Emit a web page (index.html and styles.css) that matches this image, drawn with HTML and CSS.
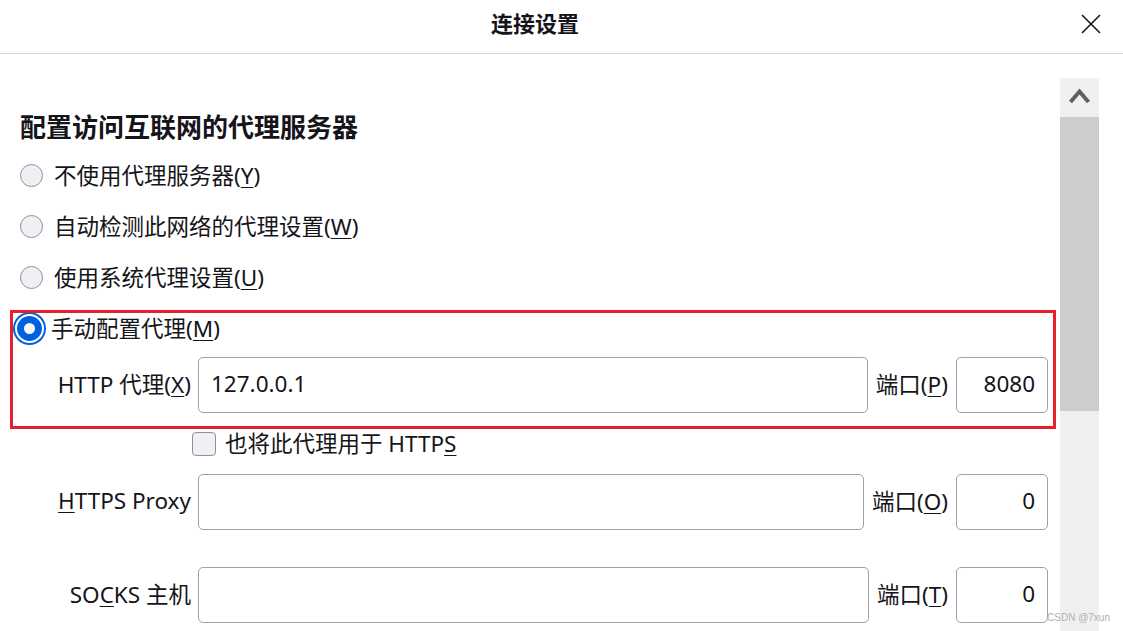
FILE: index.html
```html
<!DOCTYPE html>
<html lang="zh-CN">
  <head>
    <meta charset="utf-8" />
    <title>连接设置</title>
    <link rel="stylesheet" href="styles.css">
  </head>
  <body>
    <header class="dialog-header">
      <h1 class="dialog-title">连接设置</h1>
      <button class="close-btn" aria-label="关闭">
        <svg width="20" height="20" viewBox="0 0 20 20" fill="none" stroke="currentColor" stroke-width="1.6">
          <path d="M1 1L19 19M19 1L1 19"></path>
        </svg>
      </button>
    </header>

    <div class="dialog-body">
      <main class="content">
        <h2 class="section-title">配置访问互联网的代理服务器</h2>

        <label class="radio-row"><span class="radio"></span><span>不使用代理服务器(<u>Y</u>)</span></label>
        <label class="radio-row"><span class="radio"></span><span>自动检测此网络的代理设置(<u>W</u>)</span></label>
        <label class="radio-row"><span class="radio"></span><span>使用系统代理设置(<u>U</u>)</span></label>

        <!-- Manual proxy group, the red frame is the screenshot's annotation -->
        <div class="manual-group">
          <label class="radio-row checked"><span class="radio"></span><span>手动配置代理(<u>M</u>)</span></label>
          <div class="proxy-row first">
            <span class="proxy-label">HTTP 代理(<u>X</u>)</span>
            <div class="field">127.0.0.1</div>
            <span class="port-label">端口(<u>P</u>)</span>
            <div class="field port">8080</div>
          </div>
          <div class="annotation"></div>
        </div>

        <label class="check-row"><span class="checkbox"></span><span>也将此代理用于 HTTP<u>S</u></span></label>

        <div class="proxy-row https">
          <span class="proxy-label"><u>H</u>TTPS Proxy</span>
          <div class="field"></div>
          <span class="port-label">端口(<u>O</u>)</span>
          <div class="field port">0</div>
        </div>

        <div class="proxy-row socks">
          <span class="proxy-label">SO<u>C</u>KS 主机</span>
          <div class="field"></div>
          <span class="port-label">端口(<u>T</u>)</span>
          <div class="field port">0</div>
        </div>
      </main>

      <div class="scrollbar">
        <div class="scroll-up">
          <svg width="39" height="39" viewBox="0 0 39 39" fill="none" stroke="#606060" stroke-width="4">
            <polyline points="10.5,24 19.5,13.5 28.5,24"></polyline>
          </svg>
        </div>
        <div class="scroll-thumb"></div>
      </div>
    </div>

    <div class="watermark">CSDN @7xun</div>
  </body>
</html>
```

FILE: styles.css
```css
body {
  margin: 0;
  height: 631px;
  overflow: hidden;
  position: relative;
  font-family: "Noto Sans", "Noto Sans CJK SC", sans-serif;
  font-size: 22.5px;
  color: #15141a;
  background: #fff;
}

u {
  text-underline-offset: 3px;
  text-decoration-thickness: 1px;
}

/* Header */
.dialog-header {
  height: 54px;
  box-sizing: border-box;
  border-bottom: 1px solid #d8d8dc;
  padding-bottom: 10px;
  display: flex;
  align-items: center;
}

.dialog-title {
  flex: 1;
  margin: 0;
  padding-right: 11px;
  text-align: center;
  font-size: 22px;
  font-weight: 700;
  line-height: 30px;
  font-family: "Noto Sans CJK SC", sans-serif;
}

.close-btn {
  width: 20px;
  height: 20px;
  padding: 0;
  margin: 4px 22px 0 0;
  border: 0;
  background: none;
  color: #15141a;
  display: flex;
}

/* Body */
.dialog-body {
  display: flex;
  height: 577px;
}

.content {
  flex: 1;
  padding: 55px 12px 0 20px;
  overflow: hidden;
}

.section-title {
  margin: 0 0 7px;
  font-size: 26px;
  line-height: 34px;
  font-weight: 700;
  font-family: "Noto Sans CJK SC", sans-serif;
}

.radio-row {
  height: 51px;
  display: flex;
  align-items: center;
  gap: 11px;
  white-space: nowrap;
}

.radio-row span:last-child,
.check-row span:last-child {
  margin-top: -3px;
}

.radio {
  width: 23px;
  height: 23px;
  box-sizing: border-box;
  border-radius: 50%;
  border: 1px solid #8f8f9d;
  background: #f0f0f4;
  flex: none;
}

.radio-row.checked {
  margin-left: -3px;
  gap: 9px;
}

.radio-row.checked .radio {
  width: 25px;
  height: 25px;
  border: 7px solid #0061e0;
  background: #f9f9fb;
  box-shadow: 0 0 0 2px #fff, 0 0 0 4px #0061e0;
}

/* Proxy rows */
.manual-group {
  position: relative;
}

.annotation {
  position: absolute;
  top: 7px;
  bottom: -16px;
  left: -10px;
  right: -8px;
  border: 3px solid #e6212b;
  pointer-events: none;
}

.proxy-row {
  display: flex;
  align-items: center;
  height: 56px;
  white-space: nowrap;
}

.proxy-row > span {
  margin-top: -3px;
}

.proxy-row.first {
  margin-top: 3px;
}

.proxy-row.https {
  margin-top: 15px;
}

.proxy-row.socks {
  margin-top: 37px;
}

.proxy-label {
  width: 171px;
  flex: none;
  text-align: right;
  margin-right: 7px;
}

.field {
  flex: 1;
  height: 100%;
  box-sizing: border-box;
  border: 1px solid #9f9fa6;
  border-radius: 5px;
  padding: 0 12px 3px;
  display: flex;
  align-items: center;
}

.port-label {
  margin: 0 8px;
}

.field.port {
  flex: none;
  width: 92px;
  justify-content: flex-end;
}

.check-row {
  height: 30px;
  margin-top: 16px;
  padding-left: 172px;
  display: flex;
  align-items: center;
  gap: 9px;
  white-space: nowrap;
}

.checkbox {
  width: 24px;
  height: 24px;
  box-sizing: border-box;
  border: 1px solid #8f8f9d;
  border-radius: 4px;
  background: #f0f0f4;
  flex: none;
}

/* Scrollbar */
.scrollbar {
  width: 39px;
  margin: 24px 24px 0 0;
  background: #f0f0f0;
  flex: none;
}

.scroll-up {
  height: 39px;
}

.scroll-up svg {
  display: block;
}

.scroll-thumb {
  height: 294px;
  background: #cdcdcd;
}

.watermark {
  position: absolute;
  right: 13px;
  bottom: 8px;
  font-family: "Liberation Sans", sans-serif;
  font-size: 10px;
  color: #b0b0b0;
}
```
